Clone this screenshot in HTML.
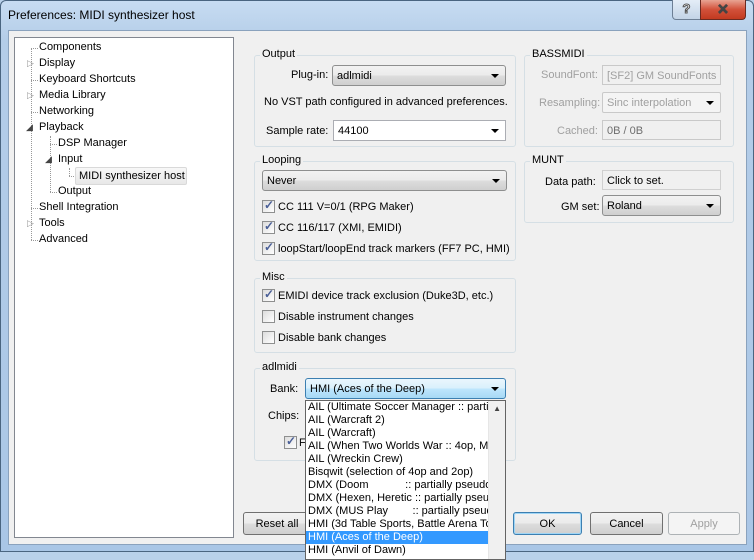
<!DOCTYPE html>
<html><head><meta charset="utf-8"><style>
*{box-sizing:border-box;margin:0;padding:0}
body{width:754px;height:552px;overflow:hidden;font-family:"Liberation Sans",sans-serif;font-size:11px;color:#000;position:relative;background:#b9d1ea}
.a{position:absolute;white-space:nowrap}
.frame{left:0;top:0;width:754px;height:552px;background:linear-gradient(#c7dcf2,#b4cde8 40px,#a9c6e6);border:1px solid #4a6580;border-radius:6px 6px 0 0}
.client{left:8px;top:30px;width:739px;height:515px;background:#f0f0f0;border:1px solid #8aa2bd}
.tree{left:14px;top:37px;width:220px;height:501px;background:#fff;border:1px solid #828790}
.gb{position:absolute;border:1px solid #d5dfe5;border-radius:3px}
.gt{position:absolute;background:#f0f0f0;padding:0 2px;top:-8px;left:5px}
.combo{position:absolute;height:21px;border:1px solid #8e8f8f;border-radius:3px;background:linear-gradient(#f2f2f2,#ebebeb 50%,#dddddd 51%,#cfcfcf);padding:4px 4px;white-space:nowrap;overflow:hidden}
.combo.w{background:#fff;border-color:#abadb3;border-radius:0}
.combo:after{content:"";position:absolute;right:6px;top:8px;border:4px solid transparent;border-top:4px solid #000;border-bottom:0}
.edit{position:absolute;height:20px;border:1px solid #abadb3;padding:4px 4px;white-space:nowrap;overflow:hidden}
.cb{position:absolute;width:13px;height:13px;border:1px solid #8e8f8f;background:linear-gradient(135deg,#dcdcdc,#fff)}
.cb.c:after{content:"✓";position:absolute;left:1px;top:-3px;font-size:12px;font-weight:bold;color:#4a5f97}
.btn{position:absolute;height:23px;border:1px solid #707070;border-radius:3px;background:linear-gradient(#f2f2f2,#ebebeb 50%,#dddddd 51%,#cfcfcf);text-align:center;line-height:22px}
.dis{color:#a0a0a0}
.ti{position:absolute;white-space:nowrap}
.dl{position:absolute;border-left:1px dotted #999}
.dh{position:absolute;border-top:1px dotted #999}
.list{left:305px;top:400px;width:201px;height:160px;background:#fff;border:1px solid #646464;overflow:hidden}
.li{height:13px;line-height:13px;padding-left:2px;white-space:nowrap;overflow:hidden;width:183px}
</style></head><body>
<div class="a frame"></div>
<div class="a" style="left:8px;top:8px;font-size:12px">Preferences: MIDI synthesizer host</div>
<div class="a" style="left:672px;top:0;width:29px;height:20px;border:1px solid #6d7f95;border-top:0;border-radius:0 0 0 4px;background:linear-gradient(#e4edf7,#c3d4e7);text-align:center;font-weight:bold;color:#fff;-webkit-text-stroke:1px #555;font-size:13px;line-height:18px">?</div>
<div class="a" style="left:700px;top:0;width:46px;height:20px;border:1px solid #6b2a20;border-top:0;border-radius:0 0 4px 0;background:linear-gradient(#e8a493,#d2513a 50%,#c23a20);text-align:center;font-weight:bold;color:#fff;-webkit-text-stroke:0.8px #444;font-size:14px;line-height:18px">✕</div>
<div class="a client"></div>
<div class="a tree"></div>
<div class="dl" style="left:31px;top:48px;height:192px"></div>
<div class="dl" style="left:50px;top:136px;height:56px"></div>
<div class="dl" style="left:69px;top:168px;height:8px"></div>
<div class="dh" style="left:31px;top:48px;width:7px"></div>
<div class="dh" style="left:31px;top:80px;width:7px"></div>
<div class="dh" style="left:31px;top:112px;width:7px"></div>
<div class="dh" style="left:31px;top:208px;width:7px"></div>
<div class="dh" style="left:31px;top:240px;width:7px"></div>
<div class="dh" style="left:50px;top:144px;width:7px"></div>
<div class="dh" style="left:50px;top:192px;width:7px"></div>
<div class="dh" style="left:69px;top:176px;width:7px"></div>
<div class="ti" style="left:27px;top:58px;color:#999;font-size:9px">▷</div>
<div class="ti" style="left:27px;top:90px;color:#999;font-size:9px">▷</div>
<div class="ti" style="left:27px;top:218px;color:#999;font-size:9px">▷</div>
<div class="ti" style="left:26px;top:122px;color:#444;font-size:9px">◢</div>
<div class="ti" style="left:45px;top:154px;color:#444;font-size:9px">◢</div>
<div class="ti" style="left:39px;top:41px">Components</div>
<div class="ti" style="left:39px;top:57px">Display</div>
<div class="ti" style="left:39px;top:73px">Keyboard Shortcuts</div>
<div class="ti" style="left:39px;top:89px">Media Library</div>
<div class="ti" style="left:39px;top:105px">Networking</div>
<div class="ti" style="left:39px;top:121px">Playback</div>
<div class="ti" style="left:58px;top:137px">DSP Manager</div>
<div class="ti" style="left:58px;top:153px">Input</div>
<div class="ti" style="left:75px;top:167px;padding:2px 3px;border:1px solid #d9d9d9;border-radius:2px;background:linear-gradient(#f8f8f8,#e8e8e8);width:112px">MIDI synthesizer host</div>
<div class="ti" style="left:58px;top:185px">Output</div>
<div class="ti" style="left:39px;top:201px">Shell Integration</div>
<div class="ti" style="left:39px;top:217px">Tools</div>
<div class="ti" style="left:39px;top:233px">Advanced</div>

<div class="gb" style="left:254px;top:55px;width:262px;height:92px"><span class="gt">Output</span></div>
<div class="a" style="left:291px;top:69px">Plug-in:</div>
<div class="combo" style="left:332px;top:65px;width:174px">adlmidi</div>
<div class="a" style="left:264px;top:96px">No VST path configured in advanced preferences.</div>
<div class="a" style="left:266px;top:125px">Sample rate:</div>
<div class="combo w" style="left:333px;top:120px;width:173px">44100</div>
<div class="gb" style="left:254px;top:161px;width:262px;height:100px"><span class="gt">Looping</span></div>
<div class="combo" style="left:262px;top:170px;width:245px">Never</div>
<div class="cb c" style="left:262px;top:200px"></div><div class="a" style="left:278px;top:201px">CC 111 V=0/1 (RPG Maker)</div>
<div class="cb c" style="left:262px;top:221px"></div><div class="a" style="left:278px;top:222px">CC 116/117 (XMI, EMIDI)</div>
<div class="cb c" style="left:262px;top:242px"></div><div class="a" style="left:278px;top:243px">loopStart/loopEnd track markers (FF7 PC, HMI)</div>
<div class="gb" style="left:254px;top:278px;width:262px;height:75px"><span class="gt">Misc</span></div>
<div class="cb c" style="left:262px;top:289px"></div><div class="a" style="left:278px;top:290px">EMIDI device track exclusion (Duke3D, etc.)</div>
<div class="cb" style="left:262px;top:310px"></div><div class="a" style="left:278px;top:311px">Disable instrument changes</div>
<div class="cb" style="left:262px;top:331px"></div><div class="a" style="left:278px;top:332px">Disable bank changes</div>
<div class="gb" style="left:254px;top:368px;width:262px;height:93px"><span class="gt">adlmidi</span></div>
<div class="a" style="left:270px;top:383px">Bank:</div>
<div class="combo" style="left:305px;top:378px;width:201px;border-color:#3c7fb1;background:linear-gradient(#eaf6fd,#d9f0fc 50%,#bee6fd 51%,#a7d9f5)">HMI (Aces of the Deep)</div>
<div class="a" style="left:268px;top:410px">Chips:</div>
<div class="cb c" style="left:284px;top:436px"></div><div class="a" style="left:299px;top:437px">F</div>
<div class="gb" style="left:524px;top:55px;width:210px;height:92px"><span class="gt">BASSMIDI</span></div>
<div class="a dis" style="left:541px;top:69px">SoundFont:</div>
<div class="edit dis" style="left:602px;top:65px;width:119px;border-color:#c9c9c9">[SF2] GM SoundFonts [</div>
<div class="a dis" style="left:539px;top:97px">Resampling:</div>
<div class="combo w dis" style="left:602px;top:92px;width:119px;border-color:#c9c9c9;border-radius:2px;background:#f4f4f4">Sinc interpolation</div>
<div class="a dis" style="left:557px;top:125px">Cached:</div>
<div class="edit dis" style="left:602px;top:120px;width:119px;border-color:#c9c9c9;color:#6d6d6d">0B / 0B</div>
<div class="gb" style="left:524px;top:161px;width:210px;height:62px"><span class="gt">MUNT</span></div>
<div class="a" style="left:545px;top:176px">Data path:</div>
<div class="edit" style="left:602px;top:170px;width:119px;border-color:#d0d0d0">Click to set.</div>
<div class="a" style="left:561px;top:201px">GM set:</div>
<div class="combo" style="left:602px;top:195px;width:119px">Roland</div>
<div class="btn" style="left:243px;top:512px;width:68px">Reset all</div>
<div class="btn" style="left:513px;top:512px;width:69px;border-color:#3c7fb1;box-shadow:inset 0 0 0 1px #9fd5f5">OK</div>
<div class="btn" style="left:590px;top:512px;width:73px">Cancel</div>
<div class="btn dis" style="left:668px;top:512px;width:72px;border-color:#adb2b5;background:#f4f4f4">Apply</div>
<div class="a list">
<div class="li">AIL (Ultimate Soccer Manager :: partial</div>
<div class="li">AIL (Warcraft 2)</div>
<div class="li">AIL (Warcraft)</div>
<div class="li">AIL (When Two Worlds War :: 4op, MI</div>
<div class="li">AIL (Wreckin Crew)</div>
<div class="li">Bisqwit (selection of 4op and 2op)</div>
<div class="li">DMX (Doom&nbsp;&nbsp;&nbsp;&nbsp;&nbsp;&nbsp;&nbsp;&nbsp;&nbsp;&nbsp;&nbsp; :: partially pseudo 4</div>
<div class="li">DMX (Hexen, Heretic :: partially pseudo</div>
<div class="li">DMX (MUS Play&nbsp;&nbsp;&nbsp;&nbsp;&nbsp;&nbsp;&nbsp; :: partially pseudo</div>
<div class="li">HMI (3d Table Sports, Battle Arena To</div>
<div class="li" style="background:#3399ff;color:#fff">HMI (Aces of the Deep)</div>
<div class="li">HMI (Anvil of Dawn)</div>
<div style="position:absolute;right:0;top:0;width:17px;height:160px;background:#f0f0f0;border-left:1px solid #e6e6e6"></div>
<div style="position:absolute;right:4px;top:3px;font-size:8px;color:#444">▲</div>
</div>
</body></html>
